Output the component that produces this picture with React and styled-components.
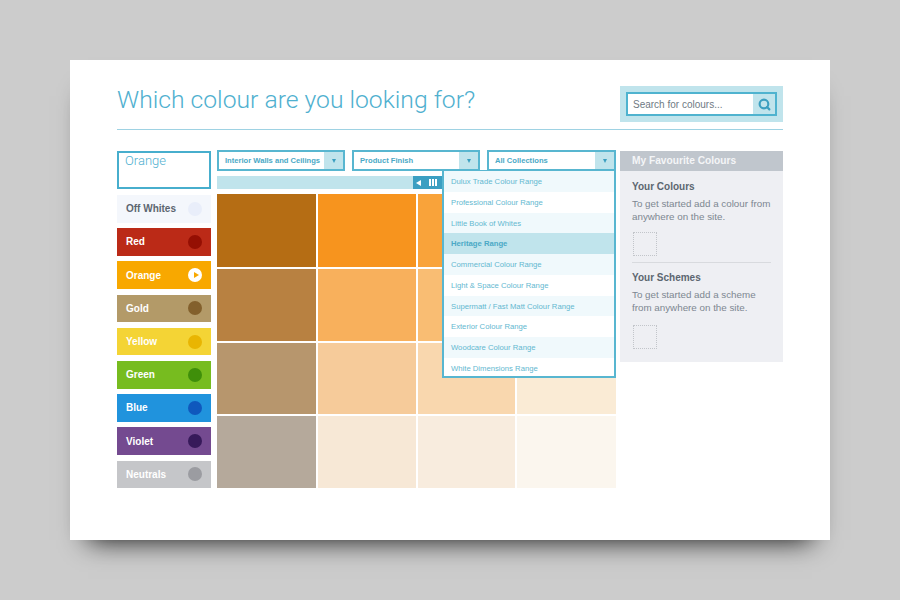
import React from "react";
import styled, { createGlobalStyle } from "styled-components";
import { Search } from "lucide-react";

const families = [
  { name: "Off Whites", bg: "#f4f7fc", dot: "#e9eefa", color: "#5c6670" },
  { name: "Red", bg: "#bb2a17", dot: "#950f03" },
  { name: "Orange", bg: "#f8a800", active: true },
  { name: "Gold", bg: "#b39a68", dot: "#83602c" },
  { name: "Yellow", bg: "#f4d435", dot: "#e9b502" },
  { name: "Green", bg: "#77bc1f", dot: "#3f8f0a" },
  { name: "Blue", bg: "#2093dd", dot: "#0f58bd" },
  { name: "Violet", bg: "#744a90", dot: "#371a5a" },
  { name: "Neutrals", bg: "#c5c6c9", dot: "#9b9ca1" },
];

const shades = [
  "#b56d14", "#f7941e", "#f9a33a", "#fab45f",
  "#b88141", "#f8b05c", "#f9bd73", "#fbcd94",
  "#b7966d", "#f6cb9a", "#f9d7ae", "#faebd5",
  "#b5a99b", "#f7e8d6", "#f8ecde", "#fbf6ee",
];

const ranges = [
  "Dulux Trade Colour Range",
  "Professional Colour Range",
  "Little Book of Whites",
  "Heritage Range",
  "Commercial Colour Range",
  "Light & Space Colour Range",
  "Supermatt / Fast Matt Colour Range",
  "Exterior Colour Range",
  "Woodcare Colour Range",
  "White Dimensions Range",
];

const GlobalStyle = createGlobalStyle`
  html, body {
    margin: 0;
    background: #cccccc;
  }
  * {
    box-sizing: border-box;
  }
`;

const Page = styled.div`
  width: 900px;
  height: 600px;
  padding: 60px 70px;
  overflow: hidden;
  font-family: "Liberation Sans", Arial, sans-serif;
`;

const Card = styled.div`
  width: 760px;
  height: 480px;
  padding: 26px 47px 0;
  background: #fff;
  box-shadow: 0 18px 26px -18px rgba(0, 0, 0, 0.95);
`;

const Header = styled.header`
  height: 44px;
  display: flex;
  justify-content: space-between;
  align-items: flex-start;
  border-bottom: 1px solid #9ed2e3;
`;

const Title = styled.h1`
  margin: 0;
  font-family: Roboto, sans-serif;
  font-size: 24.7px;
  line-height: 28px;
  font-weight: 300;
  color: #4fb0cf;
`;

const SearchWrap = styled.div`
  width: 163px;
  height: 36px;
  padding: 6px;
  background: #c0e4ec;
`;

const SearchBox = styled.div`
  height: 24px;
  display: flex;
  border: 2px solid #4fb3cf;
  background: #fff;
`;

const SearchText = styled.div`
  flex: 1;
  padding-left: 5px;
  font-size: 10px;
  line-height: 21px;
  color: #6f7a84;
`;

const SearchBtn = styled.div`
  width: 22px;
  display: flex;
  align-items: center;
  justify-content: center;
  background: #c0e4ec;
  color: #3b9fc0;
`;

const Main = styled.main`
  display: flex;
  margin-top: 21px;
`;

const Families = styled.aside`
  width: 94px;
  margin-right: 6px;
  display: flex;
  flex-direction: column;
`;

const Selected = styled.div`
  height: 38px;
  margin-bottom: 6px;
  padding-left: 6px;
  border: 2px solid #47aecd;
  font-family: Roboto, sans-serif;
  font-weight: 300;
  font-size: 13px;
  line-height: 15px;
  color: #4fb0cf;
`;

const Family = styled.div`
  height: 27.6px;
  margin-bottom: 5.6px;
  padding: 0 9px;
  display: flex;
  align-items: center;
  justify-content: space-between;
  background: ${({ $bg }) => $bg};
  color: ${({ $color }) => $color || "#fff"};
  font-size: 10px;
  font-weight: bold;
`;

const Dot = styled.span`
  width: 14px;
  height: 14px;
  border-radius: 50%;
  display: flex;
  align-items: center;
  justify-content: center;
  background: ${({ $bg }) => $bg};
`;

const PlayTriangle = styled.span`
  width: 0;
  height: 0;
  margin-left: 2px;
  border-style: solid;
  border-width: 3.5px 0 3.5px 5px;
  border-color: transparent transparent transparent #f8a800;
`;

const Center = styled.section`
  width: 399px;
  position: relative;
`;

const Selects = styled.div`
  display: flex;
  gap: 7px;
  margin-top: -1px;
`;

const Select = styled.div`
  width: ${({ $w }) => $w}px;
  height: 21px;
  display: flex;
  justify-content: space-between;
  border: 2px solid #58b6d0;
  background: #fff;
  color: #4ba9c6;
  font-size: 7.6px;
  font-weight: bold;
  line-height: 18px;
  padding-left: 6px;
  white-space: nowrap;
`;

const Arrow = styled.span`
  width: 19px;
  display: flex;
  align-items: center;
  justify-content: center;
  background: #c0e4ec;

  &::after {
    content: "";
    border-style: solid;
    border-width: 4px 2.5px 0 2.5px;
    border-color: #3b9fc0 transparent transparent transparent;
  }
`;

const Scrollbar = styled.div`
  height: 13px;
  margin-top: 5px;
  background: #c0e4ec;
`;

const Handle = styled.div`
  width: 30px;
  height: 13px;
  margin-left: 196px;
  padding-left: 3px;
  display: flex;
  align-items: center;
  gap: 8px;
  background: #3b9fc2;
`;

const HandleLeft = styled.span`
  width: 0;
  height: 0;
  border-style: solid;
  border-width: 3px 5px 3px 0;
  border-color: transparent #fff transparent transparent;
`;

const HandleGrip = styled.span`
  width: 8px;
  height: 7px;
  background: repeating-linear-gradient(
    90deg,
    #fff 0,
    #fff 1.5px,
    transparent 1.5px,
    transparent 3px
  );
`;

const Grid = styled.div`
  margin-top: 5px;
  display: grid;
  grid-template-columns: 99px 98px 97px 99px;
  grid-template-rows: 73px 72px 71px 72px;
  gap: 2px;
`;

const Shade = styled.div`
  background: ${({ $bg }) => $bg};
`;

const Dropdown = styled.ul`
  position: absolute;
  top: 19px;
  left: 225px;
  width: 174px;
  height: 208px;
  margin: 0;
  padding: 0;
  overflow: hidden;
  list-style: none;
  background: #fff;
  border: 2px solid #58b6d0;
  border-top-width: 1px;
`;

const RangeItem = styled.li`
  height: 20.75px;
  padding-left: 7px;
  font-size: 7.7px;
  line-height: 22px;
  color: ${({ $active }) => ($active ? "#4ba9c6" : "#63b8d0")};
  font-weight: ${({ $active }) => ($active ? "bold" : "normal")};
  background: ${({ $active, $odd }) =>
    $active ? "#c0e4ec" : $odd ? "#f0f9fc" : "#fff"};
`;

const Favourites = styled.aside`
  width: 163px;
  margin-left: 4px;
  height: 211px;
  background: #eeeff3;
`;

const FavHeader = styled.div`
  height: 20px;
  padding-left: 12px;
  background: #c0c6cd;
  color: #f4f5f7;
  font-size: 10.2px;
  font-weight: bold;
  line-height: 20px;
`;

const FavSection = styled.div`
  margin: 0 12px;
  padding: ${({ $first }) => ($first ? "9px" : "8px")} 0 0;
  height: ${({ $first }) => ($first ? "92px" : "auto")};
  border-bottom: ${({ $first }) => ($first ? "1px solid #d8dade" : "none")};
`;

const FavTitle = styled.h3`
  margin: 0 0 5px;
  font-size: 10px;
  line-height: 13px;
  font-weight: bold;
  color: #5c6670;
`;

const FavText = styled.p`
  margin: 0 -4px 0 0;
  font-size: 9.8px;
  line-height: 12.5px;
  color: #7d8791;
`;

const Placeholder = styled.div`
  width: 24px;
  height: 24px;
  margin: ${({ $gap }) => $gap}px 0 0 1px;
  border: 1px dotted #c2c5ca;
`;

export default function App() {
  return (
    <Page>
      <GlobalStyle />
      <Card>
        <Header>
          <Title>Which colour are you looking for?</Title>
          <SearchWrap>
            <SearchBox>
              <SearchText>Search for colours...</SearchText>
              <SearchBtn>
                <Search size={13} strokeWidth={4} />
              </SearchBtn>
            </SearchBox>
          </SearchWrap>
        </Header>
        <Main>
          <Families>
            <Selected>Orange</Selected>
            {families.map((f) => (
              <Family key={f.name} $bg={f.bg} $color={f.color}>
                {f.name}
                {f.active ? (
                  <Dot $bg="#fff">
                    <PlayTriangle />
                  </Dot>
                ) : (
                  <Dot $bg={f.dot} />
                )}
              </Family>
            ))}
          </Families>
          <Center>
            <Selects>
              <Select $w={128}>
                Interior Walls and Ceilings
                <Arrow />
              </Select>
              <Select $w={128}>
                Product Finish
                <Arrow />
              </Select>
              <Select $w={129}>
                All Collections
                <Arrow />
              </Select>
            </Selects>
            <Scrollbar>
              <Handle>
                <HandleLeft />
                <HandleGrip />
              </Handle>
            </Scrollbar>
            <Grid>
              {shades.map((s, i) => (
                <Shade key={i} $bg={s} />
              ))}
            </Grid>
            <Dropdown>
              {ranges.map((r, i) => (
                <RangeItem key={r} $odd={i % 2 === 0} $active={i === 3}>
                  {r}
                </RangeItem>
              ))}
            </Dropdown>
          </Center>
          <Favourites>
            <FavHeader>My Favourite Colours</FavHeader>
            <FavSection $first>
              <FavTitle>Your Colours</FavTitle>
              <FavText>
                To get started add a colour from anywhere on the site.
              </FavText>
              <Placeholder $gap={9} />
            </FavSection>
            <FavSection>
              <FavTitle>Your Schemes</FavTitle>
              <FavText>
                To get started add a scheme from anywhere on the site.
              </FavText>
              <Placeholder $gap={11} />
            </FavSection>
          </Favourites>
        </Main>
      </Card>
    </Page>
  );
}
